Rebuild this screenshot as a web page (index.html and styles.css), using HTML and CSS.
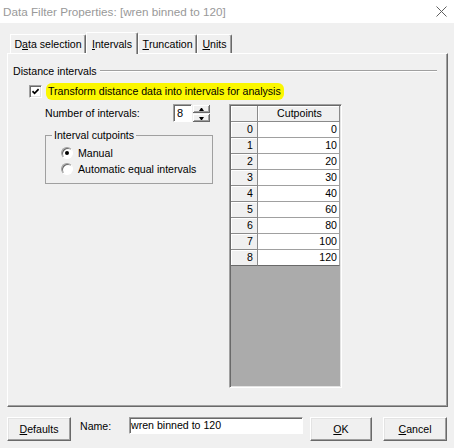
FILE: index.html
```html
<!DOCTYPE html>
<html>
<head>
<meta charset="utf-8">
<link rel="stylesheet" href="styles.css">
</head>
<body>
<div class="titlebar">
  <span class="title">Data Filter Properties: [wren binned to 120]</span>
  <svg class="close" width="11" height="11" viewBox="0 0 11 11"><path d="M0.5 0.5L10.5 10.5M10.5 0.5L0.5 10.5" stroke="#5f5f5f" stroke-width="1" fill="none"/></svg>
</div>
<div class="tabs">
  <div class="tab t-data">D<u>a</u>ta selection</div>
  <div class="tab sel t-int"><u>I</u>ntervals</div>
  <div class="tab t-trunc"><u>T</u>runcation</div>
  <div class="tab t-units"><u>U</u>nits</div>
</div>
<div class="panel">
  <div class="sect"><span>Distance intervals</span><i class="rule"></i></div>
  <div class="chk-row">
    <span class="chk"><svg width="7" height="7" viewBox="0 0 7 7"><path d="M0.5 3.2L2.6 5.3L6.6 1.2" stroke="#000" stroke-width="1.7" fill="none"/></svg></span>
    <span class="hl">Transform distance data into intervals for analysis</span>
  </div>
  <div class="body">
    <div class="left">
      <div class="num-row">
        <span class="lbl">Number of intervals:</span>
        <div class="spin">
          <span class="edit">8</span>
          <span class="btns"><span class="sb up"></span><span class="sb dn"></span></span>
        </div>
      </div>
      <fieldset class="grp">
        <legend>Interval cutpoints</legend>
        <div class="radios">
          <div class="radio-row"><span class="radio on"></span><span>Manual</span></div>
          <div class="radio-row"><span class="radio"></span><span>Automatic equal intervals</span></div>
        </div>
      </fieldset>
    </div>
    <div class="grid">
      <div class="row"><span class="rh"></span><span class="hc">Cutpoints</span></div>
      <div class="row"><span class="rh">0</span><span class="cell">0</span></div>
      <div class="row"><span class="rh">1</span><span class="cell">10</span></div>
      <div class="row"><span class="rh">2</span><span class="cell">20</span></div>
      <div class="row"><span class="rh">3</span><span class="cell">30</span></div>
      <div class="row"><span class="rh">4</span><span class="cell">40</span></div>
      <div class="row"><span class="rh">5</span><span class="cell">60</span></div>
      <div class="row"><span class="rh">6</span><span class="cell">80</span></div>
      <div class="row"><span class="rh">7</span><span class="cell">100</span></div>
      <div class="row last"><span class="rh">8</span><span class="cell">120</span></div>
      <div class="fill"></div>
    </div>
  </div>
</div>
<div class="footer">
  <div class="btn b-def"><span><u>D</u>efaults</span></div>
  <span class="name-lbl">Name:</span>
  <div class="name-in">wren binned to 120</div>
  <div class="btn b-ok"><span><u>O</u>K</span></div>
  <div class="btn b-cancel"><span><u>C</u>ancel</span></div>
</div>
</body>
</html>
```

FILE: styles.css
```css
* { box-sizing: border-box; }
html, body { margin: 0; padding: 0; }
body {
  width: 454px;
  height: 448px;
  overflow: hidden;
  background: #f0f0f0;
  font-family: "Liberation Sans", Arial, sans-serif;
  font-size: 10.6px;
  color: #000;
}
u { text-decoration: underline; text-underline-offset: 1px; }

.titlebar {
  height: 23px;
  background: #fff;
  display: flex;
  align-items: center;
  justify-content: space-between;
  padding: 0 7px 0 3px;
}
.title { font-size: 11.7px; color: #999; }
.close { display: block; }

.tabs {
  display: flex;
  align-items: flex-end;
  height: 21px;
  margin: 9px 0 0 10px;
}
.tab {
  height: 19px;
  display: flex;
  align-items: center;
  justify-content: center;
  background: #f0f0f0;
  border-top: 1px solid #fff;
  border-left: 1px solid #fff;
  border-right: 1px solid #696969;
  border-top-right-radius: 2px;
  box-shadow: inset -1px 0 #a0a0a0;
}
.tab.sel {
  height: 22px;
  margin-bottom: -1px;
  position: relative;
  z-index: 1;
}
.t-data { width: 76px; }
.t-int { width: 52px; }
.t-trunc { width: 59px; }
.t-units { width: 35px; }

.panel {
  height: 354px;
  margin: 0 6px 0 7px;
  border: 1px solid;
  border-color: #fff #696969 #696969 #fff;
  box-shadow: inset -1px -1px #a0a0a0;
  display: flex;
  flex-direction: column;
}
.sect {
  display: flex;
  align-items: center;
  margin-top: 10px;
  padding-left: 5px;
  line-height: 14px;
  height: 14px;
}
.rule {
  flex: 1;
  margin: 0 10px 0 3px;
  border-top: 1px solid #a0a0a0;
  border-bottom: 1px solid #fff;
}
.chk-row {
  display: flex;
  align-items: center;
  height: 17px;
  margin: 5px 0 0 21px;
}
.chk {
  width: 13px;
  height: 13px;
  background: #fff;
  border: 1px solid;
  border-color: #a0a0a0 #fff #fff #a0a0a0;
  box-shadow: inset 1px 1px #696969, inset -1px -1px #e3e3e3;
  display: flex;
  align-items: center;
  justify-content: center;
}
.chk svg { display: block; }
.hl {
  margin-left: 4px;
  padding: 0 3px 0 2px;
  line-height: 17px;
  background: #fbf700;
  border-radius: 6px;
}

.body {
  display: flex;
  margin: 4px 0 0 37px;
}
.left { width: 184px; }
.num-row {
  display: flex;
  align-items: center;
  height: 18px;
}
.lbl { width: 128px; }
.spin { display: flex; }
.edit {
  width: 19px;
  height: 18px;
  background: #fff;
  border: 1px solid;
  border-color: #a0a0a0 #fff #fff #a0a0a0;
  box-shadow: inset 1px 1px #696969;
  padding-left: 3px;
  line-height: 16px;
  font-size: 11px;
}
.btns {
  display: flex;
  flex-direction: column;
  gap: 1px;
  margin: 1px 0 0 1px;
}
.sb {
  width: 17px;
  height: 8px;
  background: #f0f0f0;
  box-shadow: inset -1px -1px #696969, inset 1px 1px #fff, inset -2px -2px #a0a0a0;
  display: flex;
  align-items: center;
  justify-content: center;
}
.sb::after {
  content: "";
  width: 1px;
  height: 0;
  border-left: 2px solid transparent;
  border-right: 2px solid transparent;
}
.up::after { border-bottom: 3px solid #000; }
.dn::after { border-top: 3px solid #000; }

.grp {
  margin: 6px 0 0 0;
  padding: 0;
  width: 168px;
  height: 56px;
  border: 1px solid #a0a0a0;
  min-width: 0;
}
.grp legend {
  margin-left: 6px;
  padding: 0 2px;
  line-height: 14px;
}
.radios { padding: 3px 0 0 15px; }
.radio-row {
  display: flex;
  align-items: center;
  height: 16px;
}
.radio {
  width: 12px;
  height: 12px;
  border-radius: 50%;
  background: #fff;
  border: 1px solid;
  border-color: #a0a0a0 #fff #fff #a0a0a0;
  box-shadow: inset 1px 1px #696969;
  margin-right: 5px;
  display: flex;
  align-items: center;
  justify-content: center;
}
.radio.on::after {
  content: "";
  width: 4px;
  height: 4px;
  border-radius: 50%;
  background: #000;
}

.grid {
  width: 113px;
  height: 284px;
  border: 1px solid;
  border-color: #a0a0a0 #fff #fff #a0a0a0;
  box-shadow: inset 1px 1px #696969, inset -1px -1px #e3e3e3;
  padding: 1px;
  display: flex;
  flex-direction: column;
  background: #ababab;
}
.row {
  display: grid;
  grid-template-columns: 27px 1fr;
  height: 16px;
  flex: none;
}
.rh {
  background: #f0f0f0;
  border-right: 1px solid #8a8a8a;
  border-bottom: 1px solid #8a8a8a;
  box-shadow: inset 1px 1px #fff;
  text-align: right;
  padding-right: 4px;
  line-height: 15px;
}
.hc {
  background: #f0f0f0;
  border-right: 1px solid #8a8a8a;
  border-bottom: 1px solid #8a8a8a;
  box-shadow: inset 1px 1px #fff;
  text-align: center;
  padding-left: 2px;
  line-height: 15px;
}
.cell {
  background: #fff;
  border-right: 1px solid #a0a0a0;
  border-bottom: 1px solid #a0a0a0;
  text-align: right;
  padding-right: 2px;
  line-height: 15px;
}
.row.last .cell, .row.last .rh { border-bottom-color: #696969; }
.fill { flex: 1; }

.footer {
  display: flex;
  align-items: flex-start;
  margin: 10px 0 0 7px;
}
.btn {
  height: 24px;
  background: #f0f0f0;
  border: 1px solid;
  border-color: #fff #696969 #696969 #fff;
  box-shadow: inset -1px -1px #a0a0a0, inset 1px 1px #e3e3e3;
  display: flex;
  align-items: center;
  justify-content: center;
}
.b-def { width: 64px; }
.b-ok { width: 62px; margin-left: 7px; }
.b-cancel { width: 64px; margin-left: 11px; }
.name-lbl {
  width: 49px;
  margin: 2px 0 0 9px;
  line-height: 14px;
}
.name-in {
  width: 174px;
  height: 17px;
  background: #fff;
  border: 1px solid;
  border-color: #a0a0a0 #fff #fff #a0a0a0;
  box-shadow: inset 1px 1px #696969;
  padding-left: 1px;
  line-height: 15px;
}
```
